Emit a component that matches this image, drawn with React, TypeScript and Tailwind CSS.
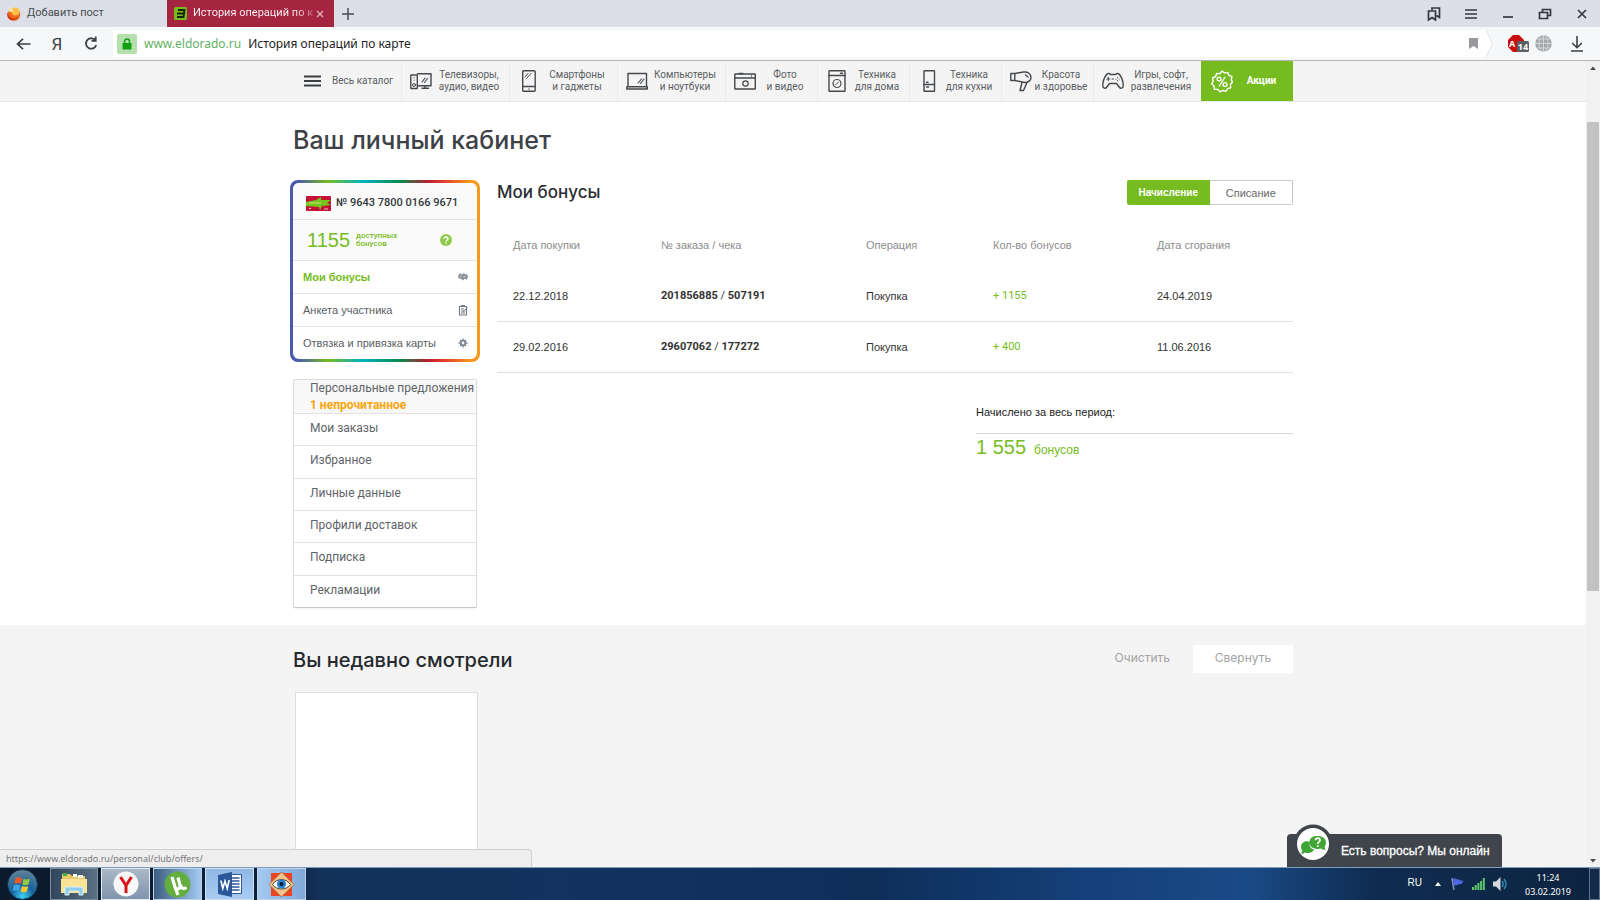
import type { ReactNode } from "react";

type IconProps = { children: ReactNode };

function LineIcon({ children }: IconProps) {
  return (
    <svg width="22" height="22" viewBox="0 0 22 22" fill="none" stroke="#44484c" strokeWidth="1.4" strokeLinejoin="round" strokeLinecap="round" className="shrink-0" aria-hidden="true">
      {children}
    </svg>
  );
}

const categories = [
  {
    lines: ["Телевизоры,", "аудио, видео"],
    wide: true,
    icon: (
      <LineIcon>
        <path d="M7.500 3.700H21v12H8.500M12 18.300h6.500M15 16v2" />
        <rect x="0.800" y="5" width="6.500" height="13.500" rx="0.500" />
        <circle cx="4" cy="15" r="1.500" strokeWidth="1" />
        <path d="M4 7.500v.1M4 10v.1M12 12l3-4M14.500 12.500l3-4" strokeWidth="1.100" />
      </LineIcon>
    ),
  },
  {
    lines: ["Смартфоны", "и гаджеты"],
    wide: true,
    icon: (
      <LineIcon>
        <rect x="4.700" y="0.800" width="12.500" height="20.400" rx="1" />
        <path d="M5 16.500h12M11 18.900v.1" />
        <path d="M7 7l3-3.500M8.500 8.500l4.500-5" strokeWidth="1" />
      </LineIcon>
    ),
  },
  {
    lines: ["Компьютеры", "и ноутбуки"],
    wide: true,
    icon: (
      <LineIcon>
        <path d="M2 16.500v-13h18.500v13M0.800 16.800h20.500v2.200H0.800z" />
        <path d="M12 13l3.500-4M14.500 13.500l3.500-4.500" strokeWidth="1.100" />
      </LineIcon>
    ),
  },
  {
    lines: ["Фото", "и видео"],
    wide: false,
    icon: (
      <LineIcon>
        <rect x="0.800" y="4" width="20.500" height="15" rx="0.500" />
        <path d="M1 8h20M5 3.500h4M17.500 6v.1" />
        <circle cx="11.500" cy="13.500" r="2.700" strokeWidth="1.200" />
      </LineIcon>
    ),
  },
  {
    lines: ["Техника", "для дома"],
    wide: false,
    icon: (
      <LineIcon>
        <rect x="3" y="0.800" width="16" height="20.400" rx="0.500" />
        <path d="M3 5.500h16M14.500 3.300h2" />
        <circle cx="11" cy="13.500" r="4" strokeWidth="1.200" />
        <path d="M9.500 15l3-3" strokeWidth="1" />
      </LineIcon>
    ),
  },
  {
    lines: ["Техника", "для кухни"],
    wide: false,
    icon: (
      <LineIcon>
        <rect x="6" y="0.800" width="10.500" height="20.400" rx="0.500" />
        <path d="M6 14.500h10.500M8.500 12.300h1.500M8.500 17h2" />
      </LineIcon>
    ),
  },
  {
    lines: ["Красота", "и здоровье"],
    wide: false,
    icon: (
      <LineIcon>
        <path d="M0.800 3.500h4l9-1.500c4-.5 7.200 2 7.200 5.500 0 3-3 5-6 5L4.800 10.500h-4zM4.800 3.500v7" />
        <path d="M12 12.500L10 20.500h3.500l3.500-8M15.500 5l2.500 2" />
      </LineIcon>
    ),
  },
  {
    lines: ["Игры, софт,", "развлечения"],
    wide: true,
    icon: (
      <LineIcon>
        <path d="M4.500 4.500C6 3 7.500 3.500 8.500 4.500h5c1-1 2.500-1.500 4 0C20 8 21.300 13 21.200 16c-.2 2.500-2.700 3-4 1L14.500 13.500h-7L4.800 17c-1.300 2-3.800 1.500-4-1C0.700 13 2 8 4.500 4.500z" />
        <path d="M4.800 9h3M6.300 7.500v3M15.500 7.500v.1M15.500 10.500v.1M17 9v.1M14 9v.1M10 9h1.500" strokeWidth="1.100" />
      </LineIcon>
    ),
  },
];

const clubLinks = [
  {
    label: "Мои бонусы",
    active: true,
    icon: (
      <g fill="#8b9198">
        <path d="M1 5l2-3 2 1.500L7 2l1.500 1.500L10 3l1 3-1.500 3-1.500-1.500L6 9.500 4 7.500 2 8z" />
        <path d="M3 5.500l1.500-1M6.500 6L8 5" stroke="#fff" strokeWidth="0.700" />
      </g>
    ),
  },
  {
    label: "Анкета участника",
    active: false,
    icon: (
      <g fill="none" stroke="#737a82" strokeWidth="1.100">
        <path d="M2.500 2.500h7v8.500h-7zM4 1.500h4M4 5h3M4 7h3M4 9h4M6.500 8l4-4.500" />
      </g>
    ),
  },
  {
    label: "Отвязка и привязка карты",
    active: false,
    icon: (
      <g fill="none" stroke="#7d8790">
        <circle cx="6" cy="6" r="2.300" strokeWidth="1.800" />
        <path d="M6 1.500v2M6 8.500v2M1.500 6h2M8.500 6h2M3 3l1 1M8 8l1 1M3 9l1-1M8 4l1-1" strokeWidth="1.400" />
      </g>
    ),
  },
];

const accountLinks = ["Мои заказы", "Избранное", "Личные данные", "Профили доставок", "Подписка", "Рекламации"];

const operations = [
  { date: "22.12.2018", order: "201856885", check: "507191", kind: "Покупка", bonus: "+ 1155", expires: "24.04.2019" },
  { date: "29.02.2016", order: "29607062", check: "177272", kind: "Покупка", bonus: "+ 400", expires: "11.06.2016" },
];

function TabStrip() {
  return (
    <div className="flex h-[27px] shrink-0 items-stretch bg-[#dcdfe7] font-['Roboto',sans-serif] text-[11px] text-[#4a4d52]">
      <button type="button" className="flex w-[167px] items-center gap-1.5 pl-[7px]">
        <svg width="14" height="14" viewBox="0 0 14 14" aria-hidden="true">
          <circle cx="7" cy="7.500" r="6.300" fill="#ef6a1a" />
          <path d="M1 5a6 6 0 0 0 10 5 6 6 0 0 1-9 2A6 6 0 0 1 1 5z" fill="#c8330e" />
          <circle cx="8.500" cy="4.500" r="4" fill="#ffc04a" />
          <circle cx="4" cy="3" r="2.200" fill="#fbe0a0" />
        </svg>
        Добавить пост
      </button>
      <div className="flex w-[167px] items-center bg-[#a5243f] pl-[7px] text-white">
        <button type="button" className="flex min-w-0 flex-1 items-center gap-1.5">
          <svg width="13" height="13" viewBox="0 0 13 13" className="shrink-0" aria-hidden="true">
            <rect width="13" height="13" rx="1.500" fill="#76bc21" />
            <path d="M4 3h6.500L9.500 10H3M3 6.500h6" fill="none" stroke="#16240a" strokeWidth="1.900" />
          </svg>
          <span className="bg-linear-to-r from-white from-85% to-white/30 bg-clip-text text-left whitespace-nowrap text-transparent">
            История операций по к
          </span>
        </button>
        <button type="button" aria-label="Закрыть вкладку" className="flex w-7 justify-center">
          <svg width="8" height="8" viewBox="0 0 8 8" stroke="#e6bcc5" strokeWidth="1.100" aria-hidden="true">
            <path d="M1 1l6 6M7 1L1 7" />
          </svg>
        </button>
      </div>
      <button type="button" aria-label="Новая вкладка" className="flex w-[27px] items-center justify-center">
        <svg width="12" height="12" viewBox="0 0 12 12" stroke="#4a4d52" strokeWidth="1.500" aria-hidden="true">
          <path d="M6 0v12M0 6h12" />
        </svg>
      </button>
      <div className="ml-auto flex items-center gap-[23px] pr-[11px]">
        <button type="button" aria-label="Закладки">
          <svg width="14" height="14" viewBox="0 0 14 14" fill="none" stroke="#34383e" strokeWidth="1.700" aria-hidden="true">
            <path d="M1.500 4h7v9L5 10.500 1.500 13zM5 3V1h7.500v9.500L9.500 8.500" />
          </svg>
        </button>
        <button type="button" aria-label="Меню">
          <svg width="14" height="14" viewBox="0 0 14 14" stroke="#34383e" strokeWidth="1.700" aria-hidden="true">
            <path d="M1 3h12M1 7h12M1 11h12" />
          </svg>
        </button>
        <button type="button" aria-label="Свернуть окно">
          <svg width="14" height="14" viewBox="0 0 14 14" stroke="#34383e" strokeWidth="1.700" aria-hidden="true">
            <path d="M2 10h10" />
          </svg>
        </button>
        <button type="button" aria-label="Развернуть окно">
          <svg width="14" height="14" viewBox="0 0 14 14" fill="none" stroke="#34383e" strokeWidth="1.700" aria-hidden="true">
            <path d="M1.500 5.500h8v6h-8zM4.500 5V2.500h8v6H10" />
          </svg>
        </button>
        <button type="button" aria-label="Закрыть окно">
          <svg width="14" height="14" viewBox="0 0 14 14" stroke="#34383e" strokeWidth="1.700" aria-hidden="true">
            <path d="M3 3l8 8M11 3l-8 8" />
          </svg>
        </button>
      </div>
    </div>
  );
}

function AddressBar() {
  return (
    <div className="flex h-[34px] shrink-0 items-center border-b border-[#b5b7ba] bg-[#f5f7f9] pr-[17px] text-[12px]">
      <button type="button" aria-label="Назад" className="flex w-[46px] justify-center">
        <svg width="15" height="12" viewBox="0 0 15 12" fill="none" stroke="#3c4045" strokeWidth="1.700" aria-hidden="true">
          <path d="M14.500 6H1.500M7 .8L1.500 6 7 11.200" />
        </svg>
      </button>
      <button type="button" className="w-[22px] font-['Roboto',sans-serif] text-[17px] leading-5 text-[#3c4045]">
        Я
      </button>
      <button type="button" aria-label="Обновить" className="flex w-[45px] justify-center">
        <svg width="14" height="15" viewBox="0 0 14 15" fill="none" stroke="#3c4045" strokeWidth="1.800" aria-hidden="true">
          <path d="M11.500 4.500A5.200 5.200 0 1 0 12.200 9M7.500 4.800h4.200V.6" />
        </svg>
      </button>
      <div className="flex h-[27px] min-w-0 flex-1 items-center bg-white pl-1">
        <span className="flex size-5 items-center justify-center rounded-xs bg-[#b5e0ad]">
          <svg width="10" height="12" viewBox="0 0 10 12" aria-hidden="true">
            <path d="M2.500 6V3.500a2.500 2.500 0 0 1 5 0V6" fill="none" stroke="#12a012" strokeWidth="1.500" />
            <rect x="0.500" y="5" width="9" height="6.500" rx="0.500" fill="#12a012" />
          </svg>
        </span>
        <label htmlFor="address" className="pl-[7px] text-[#62b163]">
          www.eldorado.ru
        </label>
        <input id="address" type="text" defaultValue="История операций по карте" className="min-w-0 flex-1 bg-transparent pl-[7px] text-[#222] outline-none" />
        <button type="button" aria-label="В закладки" className="px-1.5">
          <svg width="9" height="11" viewBox="0 0 9 11" fill="#97999c" aria-hidden="true">
            <path d="M0 0h9v11L4.500 8 0 11z" />
          </svg>
        </button>
      </div>
      <svg width="9" height="27" viewBox="0 0 9 27" aria-hidden="true">
        <path d="M0 0h2l6.500 13.500L2 27H0z" fill="#fff" />
        <path d="M2 0l6.500 13.500L2 27" fill="none" stroke="#e3e5e8" />
      </svg>
      <button type="button" aria-label="Блокировщик рекламы" className="ml-[15px]">
        <svg width="21" height="18" viewBox="0 0 21 18" aria-hidden="true">
          <path d="M5 0h6l5 5v7l-5 5H5L0 12V5z" fill="#c70d0d" />
          <text x="1" y="12" fontSize="9" fontWeight="700" fill="#fff" fontFamily="Noto Sans, sans-serif">A</text>
          <rect x="9" y="6" width="12" height="11" rx="1.500" fill="#5c6065" />
          <text x="15" y="15" fontSize="9" fontWeight="700" fill="#fff" textAnchor="middle" fontFamily="Noto Sans, sans-serif">14</text>
        </svg>
      </button>
      <button type="button" aria-label="Сеть" className="ml-1.5">
        <svg width="17" height="17" viewBox="0 0 17 17" aria-hidden="true">
          <circle cx="8.500" cy="8.500" r="8.300" fill="#a4a6a8" />
          <g fill="none" stroke="#d6d7d8">
            <path d="M0 8.500h17M8.500 0v17M2 4h13M2 13h13" />
            <ellipse cx="8.500" cy="8.500" rx="4.500" ry="8.300" />
          </g>
        </svg>
      </button>
      <button type="button" aria-label="Загрузки" className="ml-[19px]">
        <svg width="12" height="16" viewBox="0 0 12 16" fill="none" stroke="#3c4045" strokeWidth="1.600" aria-hidden="true">
          <path d="M6 0v11.500M1.200 7L6 11.700 10.800 7M0 15h12" />
        </svg>
      </button>
    </div>
  );
}

function CategoryNav() {
  return (
    <nav className="border-b border-[#e9e9e9] bg-[#f4f4f4] font-['Roboto',sans-serif] text-[10px] leading-3 text-[#5a5e62]">
      <ul className="mx-auto flex h-10 max-w-[1000px]">
        <li className="flex w-[108px]">
          <a href="#catalog" className="flex flex-1 items-center gap-[11px] pl-[11px]">
            <svg width="17" height="12" viewBox="0 0 17 12" stroke="#3a3d40" strokeWidth="1.800" aria-hidden="true">
              <path d="M0 1.500h17M0 6h17M0 10.500h17" />
            </svg>
            Весь каталог
          </a>
        </li>
        {categories.map((c) => (
          <li key={c.lines.join(" ")} className={c.wide ? "flex w-[108px] border-l border-[#eaeaea]" : "flex w-[92px] border-l border-[#eaeaea]"}>
            <a href="#category" className="flex flex-1 items-center pl-2">
              {c.icon}
              <span className="flex-1 pr-[3px] text-center whitespace-nowrap">
                {c.lines[0]}
                <br />
                {c.lines[1]}
              </span>
            </a>
          </li>
        ))}
        <li className="flex w-[92px] bg-[#76bc21] font-bold text-white">
          <a href="#promo" className="flex flex-1 items-center pl-2.5">
            <svg width="22" height="23" viewBox="0 0 22 23" fill="none" stroke="#fff" strokeWidth="1.400" strokeLinejoin="round" aria-hidden="true">
              <path d="M11 1l2.500 2 3.300-.6 1.100 3 3 1.200-.6 3.300 1.200 2.100-2.100 2.500.3 3.300-3.100.8-1.600 2.800-3-1.100L9 21.900l-2.200-2.500-3.300-.2-.5-3.200-2.300-2.200 1.500-2.800L1.600 7.800l3-1.300L5.600 3.400l3.200.4z" />
              <circle cx="8" cy="9" r="1.900" />
              <circle cx="14" cy="14.500" r="1.900" />
              <path d="M14 7l-6 9.500" />
            </svg>
            <span className="flex-1 pr-[3px] text-center">Акции</span>
          </a>
        </li>
      </ul>
    </nav>
  );
}

function ClubCard() {
  return (
    <section className="-mx-[3px] rounded-lg bg-[linear-gradient(90deg,#4a5bab_0%,#4a5bab_4%,#76bc21_20%,#00b3c4_38%,#0a8a4a_58%,#b3202f_72%,#e2362a_80%,#f39a1f_95%)] p-[3px] font-['Liberation_Sans',Arial,sans-serif] text-[11px] text-[#5a5e63]">
      <div className="overflow-hidden rounded-md bg-white">
        <div className="flex h-[37px] items-center gap-[5px] border-b border-[#e3e3e3] bg-[#fafafa] pt-1 pl-[13px] font-['Roboto',sans-serif] text-[11px] font-medium text-[#33373c]">
          <svg width="25" height="15" viewBox="0 0 25 15" aria-hidden="true">
            <rect width="25" height="15" rx="1" fill="#c31235" />
            <path d="M0 6l10-2 5-3v3h10l-4 3 4 2-9 1-2 4-1-3-13-1z" fill="#76c51f" />
            <path d="M3 7h12" stroke="#c9e67c" strokeWidth="1" />
            <path d="M3 12.500h2M18 13h4" stroke="#f3c4cc" />
          </svg>
          <span className="whitespace-nowrap">№ 9643 7800 0166 9671</span>
        </div>
        <div className="flex h-[41px] items-center border-b border-[#e3e3e3] bg-[#fafafa] pr-[25px] pl-3.5 text-[#76bc21]">
          <span className="text-[20px]">1155</span>
          <span className="pl-1.5 font-['Roboto',sans-serif] text-[8px] leading-2 font-medium">
            доступных
            <br />
            бонусов
          </span>
          <button type="button" aria-label="Справка о бонусах" className="ml-auto">
            <svg width="12" height="12" viewBox="0 0 12 12" aria-hidden="true">
              <circle cx="6" cy="6" r="6" fill="#8fcb4a" />
              <path d="M4 4.800C4 2.500 8 2.500 8 4.700 8 6 6 6 6 7.500M6 8.600v1.200" fill="none" stroke="#fff" strokeWidth="1.400" />
            </svg>
          </button>
        </div>
        <ul>
          {clubLinks.map((l) => (
            <li key={l.label} className="border-b border-[#e3e3e3] last:border-b-0">
              <a href="#club" className={l.active ? "flex h-8 items-center justify-between pr-2 pl-2.5 font-bold text-[#76bc21]" : "flex h-8 items-center justify-between pr-2 pl-2.5"}>
                {l.label}
                <svg width="12" height="12" viewBox="0 0 12 12" aria-hidden="true">
                  {l.icon}
                </svg>
              </a>
            </li>
          ))}
        </ul>
      </div>
    </section>
  );
}

function AccountMenu() {
  return (
    <ul className="mt-[17px] flex h-[229px] flex-col rounded-xs border border-[#dcdcdc] border-b-[#c6c6c6] bg-white font-['Roboto',sans-serif] text-[12px] text-[#5f6368] shadow-xs">
      <li className="bg-[#f8f8f8]">
        <a href="#offers" className="block h-[33px] pl-4 leading-[17px] whitespace-nowrap">
          Персональные предложения
          <br />
          <span className="font-bold text-[#f9a50b]">1 непрочитанное</span>
        </a>
      </li>
      {accountLinks.map((label) => (
        <li key={label} className="flex flex-1 border-t border-[#e1e1e1]">
          <a href="#account" className="flex-1 pt-1.5 pl-4 leading-4">
            {label}
          </a>
        </li>
      ))}
    </ul>
  );
}

function BonusHistory() {
  return (
    <section className="min-w-0 flex-1 font-['Liberation_Sans',Arial,sans-serif] text-[11px] text-[#333]">
      <div className="flex items-center justify-between">
        <h2 className="font-['Inter',sans-serif] text-[17px] font-medium text-[#2a2d31]">Мои бонусы</h2>
        <div className="flex h-[25px] w-[166px]">
          <button type="button" className="flex-1 rounded-l-xs bg-[#76bc21] text-[10px] font-bold text-white">
            Начисление
          </button>
          <button type="button" className="flex-1 rounded-r-xs border border-l-0 border-[#c9c9c9] text-[#666]">
            Списание
          </button>
        </div>
      </div>
      <table className="mt-[15px] w-full table-fixed text-left">
        <thead>
          <tr className="h-[50px] text-[#8c8c8c]">
            <th className="w-[164px] pl-4 font-normal">Дата покупки</th>
            <th className="w-[205px] font-normal">№ заказа / чека</th>
            <th className="w-[127px] font-normal">Операция</th>
            <th className="w-[164px] font-normal">Кол-во бонусов</th>
            <th className="font-normal">Дата сгорания</th>
          </tr>
        </thead>
        <tbody>
          {operations.map((o) => (
            <tr key={o.order} className="h-[51px] border-b border-[#e0e0e0]">
              <td className="pl-4">{o.date}</td>
              <td className="font-['Roboto',sans-serif]">
                <b className="font-bold">{o.order}</b> / <b className="font-bold">{o.check}</b>
              </td>
              <td>{o.kind}</td>
              <td className="font-['Roboto',sans-serif] text-[#76bc21]">{o.bonus}</td>
              <td>{o.expires}</td>
            </tr>
          ))}
        </tbody>
      </table>
      <div className="mt-[30px] ml-auto w-[317px]">
        <p className="border-b border-[#d4d4d4] pb-3 leading-[18px] text-[#222]">Начислено за весь период:</p>
        <p className="text-[12px] leading-[26px] text-[#76bc21]">
          <span className="pr-2 text-[20px]">1 555</span>
          бонусов
        </p>
      </div>
    </section>
  );
}

function RecentlyViewed() {
  return (
    <section className="flex-1 bg-[#f4f4f4]">
      <div className="mx-auto max-w-[1000px] pt-5">
        <div className="flex items-start justify-between text-[12px] text-[#a3a3a3]">
          <h2 className="pt-px text-[20px] leading-7 font-medium text-[#26292d]">Вы недавно смотрели</h2>
          <div className="flex">
            <button type="button" className="h-7 px-[23px] pb-0.5">
              Очистить
            </button>
            <button type="button" className="h-7 w-[100px] bg-white pb-0.5">
              Свернуть
            </button>
          </div>
        </div>
        <div className="mt-[18px] ml-0.5 h-[159px] w-[183px] border border-[#dedede] bg-white" />
      </div>
    </section>
  );
}

function ScrollBar() {
  return (
    <div className="flex w-3.5 shrink-0 flex-col items-center bg-[#f1f1f1] py-1" aria-hidden="true">
      <svg width="6" height="4" viewBox="0 0 6 4" fill="#4b4b4b" className="mt-px">
        <path d="M0 4l3-3.500L6 4z" />
      </svg>
      <div className="h-[52px]" />
      <div className="w-3 flex-7 bg-[#c2c2c2]" />
      <div className="flex-4" />
      <svg width="6" height="4" viewBox="0 0 6 4" fill="#4b4b4b">
        <path d="M0 0l3 3.500L6 0z" />
      </svg>
    </div>
  );
}

function ChatWidget() {
  return (
    <button type="button" className="absolute right-[98px] bottom-0 flex h-[33px] w-[215px] items-center rounded-t-sm bg-[#40454c] pl-[54px] font-['Liberation_Sans',Arial,sans-serif] text-[12px] whitespace-nowrap text-white [-webkit-text-stroke:0.3px_white]">
      <svg width="40" height="40" viewBox="0 0 40 40" className="absolute -top-2.5 left-1.5" aria-hidden="true">
        <circle cx="20" cy="20" r="19.500" fill="#40454c" />
        <circle cx="20" cy="20" r="16" fill="#fff" />
        <path d="M17 18c-5-2-9 1-9 5 0 2 1 3 1.500 4L8 30c2 0 3-1 4-1.500 4 1.500 8 0 9-3-4-1-5-4-4-7.500z" fill="#3fa535" />
        <path d="M24.500 12c5 0 8.500 2.500 8.500 6.500 0 2-.7 3.300-1.500 4.300L32.500 26c-2 0-3.500-1-4.500-1.500-6 1.500-11.500-1-11.500-6S20 12 24.500 12z" fill="#3fa535" />
        <path d="M22.600 16.300c0-2.800 4.400-2.800 4.400 0 0 1.600-2.200 1.600-2.200 3.600M24.800 21.200v1.800" fill="none" stroke="#fff" strokeWidth="1.700" />
      </svg>
      Есть вопросы? Мы онлайн
    </button>
  );
}

function Taskbar() {
  return (
    <footer className="flex h-[33px] shrink-0 items-stretch border-t border-[#7f9bb8] bg-[linear-gradient(90deg,#0b1a2c_0%,#0d2038_18%,#12325a_20%,#12335f_35%,#0e2f5a_55%,#15407a_68%,#1a4a86_78%,#0f2c50_86%,#0d2440_100%)] text-[11px] text-white">
      <button type="button" aria-label="Пуск" className="flex w-[50px] items-center pl-[7px]">
        <svg width="31" height="31" viewBox="0 0 31 31" aria-hidden="true">
          <defs>
            <radialGradient id="orb" cx="50%" cy="90%" r="85%">
              <stop offset="0" stopColor="#3cd0f5" />
              <stop offset="0.450" stopColor="#17629c" />
              <stop offset="1" stopColor="#5f8298" />
            </radialGradient>
          </defs>
          <circle cx="15.500" cy="15.500" r="15" fill="url(#orb)" stroke="#0d2c46" />
          <path d="M8.500 9c2-1 4-1 6.500.3L13.800 15c-2-1.200-4-1.200-6.500-.2z" fill="#ef5a28" />
          <path d="M16.500 9.800c2 1 4 1 6.500 0l-1.500 5.800c-2.200 1-4.200.8-6.200-.2z" fill="#93c83e" />
          <path d="M6.800 16.200c2.300-1 4.500-.9 6.500.3L12 22c-2-1-4.200-1.100-6.300 0z" fill="#3fa7e8" />
          <path d="M15 17c2 1 4 1 6.200.1l-1.500 5.600c-2 1-4 .8-6-.3z" fill="#fdc82f" />
        </svg>
      </button>
      <div className="flex gap-[3px]">
        <button type="button" aria-label="Проводник" className="flex w-[48px] items-center justify-center border border-[#7d8d9c] bg-linear-to-r from-[#31465c] to-[#5b7185]">
          <svg width="28" height="26" viewBox="0 0 28 26" aria-hidden="true">
            <path d="M2 3h8l2 2h13v17H2z" fill="#e9c867" />
            <path d="M3 2h4v3H3z" fill="#3dae49" />
            <path d="M13 3h4v3h-4z" fill="#fff" />
            <path d="M18 4h5v3h-5z" fill="#f6f6f6" />
            <path d="M1 8h26v14H1z" fill="#f8e397" />
            <path d="M5 24v-8h18v8h-4v-4H9v4z" fill="#8fcdea" stroke="#d8f0fa" />
          </svg>
        </button>
        <button type="button" aria-label="Браузер" className="flex w-[49px] items-center justify-center border border-[#e4ebf1] bg-linear-to-b from-[#a9b8c8] to-[#8094ab]">
          <svg width="26" height="26" viewBox="0 0 26 26" aria-hidden="true">
            <circle cx="13" cy="13" r="12.500" fill="#f7f7f7" />
            <path d="M7.500 6l5.500 8.500L18.500 6M13 14v8" fill="none" stroke="#d8141b" strokeWidth="3" />
          </svg>
        </button>
        <button type="button" aria-label="Торрент" className="flex w-[49px] items-center justify-center border border-[#bcd4ec] bg-linear-to-r from-[#3d5f80] to-[#a5cbf3]">
          <svg width="27" height="27" viewBox="0 0 27 27" aria-hidden="true">
            <circle cx="13.500" cy="13.500" r="13" fill="#64ad3f" />
            <path d="M8 6l3 10c1.500 3 6 2 5-1.500L14 6.500M16.500 14c1 3.500 3 4.500 6 2.500M11 16l3 8" fill="none" stroke="#fff" strokeWidth="3.200" />
          </svg>
        </button>
        <button type="button" aria-label="Word" className="flex w-[49px] items-center justify-center border border-[#cfe2f5] bg-linear-to-b from-[#90b8e4] to-[#a8ccf4]">
          <svg width="26" height="25" viewBox="0 0 26 25" aria-hidden="true">
            <path d="M13 2.500h11.500v19H13z" fill="#fff" stroke="#2b579a" />
            <path d="M15 6h7.500M15 9h7.500M15 12h7.500M15 15h7.500M15 18h7.500" stroke="#2b579a" strokeWidth="1.300" />
            <path d="M1 3l14-3v25L1 22z" fill="#2b579a" />
            <path d="M3.800 8.500l2 8 2.200-7.500 2.200 7.500 2-8.500" fill="none" stroke="#fff" strokeWidth="1.600" />
          </svg>
        </button>
        <button type="button" aria-label="Просмотр изображений" className="flex w-[49px] items-center justify-center border border-[#bcd4ec] bg-linear-to-r from-[#a5c9f0] to-[#7fa9d8]">
          <svg width="27" height="27" viewBox="0 0 27 27" aria-hidden="true">
            <rect x="3" y="2" width="21" height="23" fill="#ee4426" />
            <path d="M13.500 1L26 13.500 13.500 26 1 13.500z" fill="#f2c48b" stroke="#8b5a2b" strokeWidth="0.700" />
            <path d="M4.500 13.500c4-6.500 14-6.500 18 0-4 6-14 6-18 0z" fill="#fff" stroke="#4d3c2b" />
            <circle cx="13.500" cy="13" r="4.600" fill="#2d7fd0" />
            <circle cx="13.500" cy="13" r="2" fill="#0b1a2c" />
          </svg>
        </button>
      </div>
      <div className="ml-auto flex items-center">
        <span className="pb-1 font-['Liberation_Sans',Arial,sans-serif] text-[10px]">RU</span>
        <div className="flex items-center gap-2 pl-[13px]">
          <svg width="6" height="4" viewBox="0 0 6 4" fill="#fff" aria-hidden="true">
            <path d="M0 4l3-4 3 4z" />
          </svg>
          <svg width="13" height="14" viewBox="0 0 13 14" className="ml-0.5" aria-hidden="true">
            <path d="M1 1l2 12" stroke="#8794c8" strokeWidth="1.500" />
            <path d="M2 2c3-1.500 4 1 6 .5 1 1 2 1.500 4.500 1C11 8 9 7 7 7.500 5 9 4 8 3 8.500z" fill="#5168e4" />
          </svg>
          <svg width="13" height="12" viewBox="0 0 13 12" fill="#5fc86b" aria-hidden="true">
            <path d="M0 9h2v3H0zM2.700 7h2v5h-2zM5.400 5h2v7h-2zM8.100 3h2v9h-2zM10.800 0h2v12h-2z" />
          </svg>
          <svg width="14" height="14" viewBox="0 0 14 14" aria-hidden="true">
            <path d="M0 4.500h3L7.500 0v14L3 9.500H0z" fill="#d5d8dc" />
            <path d="M9 4c1.500 2 1.500 4 0 6M11 2c2.500 3 2.500 7 0 10" fill="none" stroke="#3290b5" strokeWidth="1.400" />
          </svg>
        </div>
        <p className="w-[82px] pt-0.5 text-center text-[9px] leading-[14px]">
          11:24
          <br />
          03.02.2019
        </p>
        <button type="button" aria-label="Показать рабочий стол" className="h-full w-[11px] border border-[#5c7590] bg-[#15294a]" />
      </div>
    </footer>
  );
}

export default function App() {
  return (
    <div className="flex h-screen flex-col overflow-hidden bg-white font-['Noto_Sans','Open_Sans',sans-serif]">
      <TabStrip />
      <AddressBar />
      <div className="relative flex min-h-0 flex-1">
        <main className="flex min-w-0 flex-1 flex-col overflow-hidden font-['Inter',sans-serif]">
          <CategoryNav />
          <div className="mx-auto w-full max-w-[1000px] pb-[17px]">
            <h1 className="pt-5 text-[25px] leading-9 font-medium text-[#3d4248]">Ваш личный кабинет</h1>
            <div className="flex items-start gap-5 pt-[22px]">
              <aside className="w-[184px] shrink-0">
                <ClubCard />
                <AccountMenu />
              </aside>
              <BonusHistory />
            </div>
          </div>
          <RecentlyViewed />
        </main>
        <ScrollBar />
        <p className="absolute bottom-0 left-0 h-[18px] w-[532px] rounded-tr-sm border-t border-r border-[#cfcfcf] bg-[#eeeeee] pl-1.5 font-['Noto_Sans',sans-serif] text-[9px] leading-[17px] text-[#77797c]">
          https://www.eldorado.ru/personal/club/offers/
        </p>
        <ChatWidget />
      </div>
      <Taskbar />
    </div>
  );
}
